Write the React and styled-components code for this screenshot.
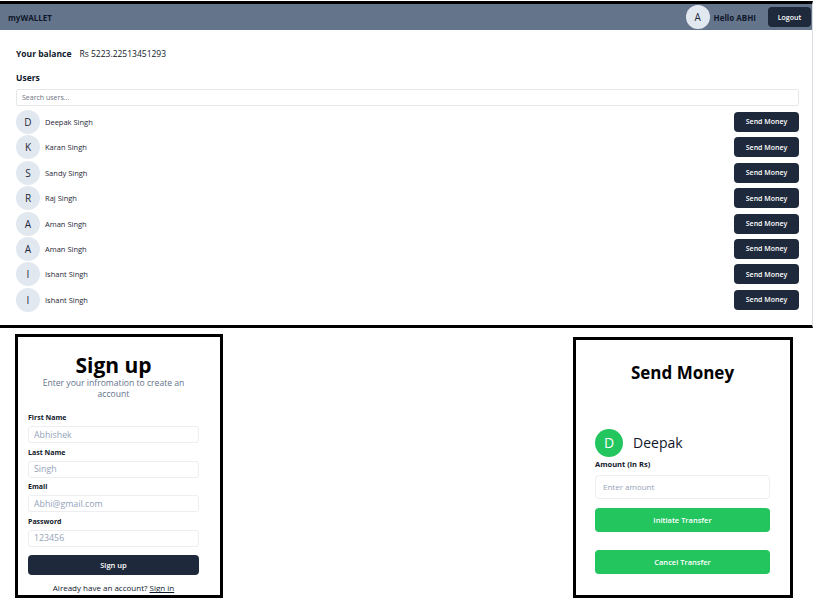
import React from "react";
import styled, { createGlobalStyle } from "styled-components";

const Global = createGlobalStyle`
  html, body { margin: 0; padding: 0; background: #fff; }
  body { font-family: "Open Sans", "Noto Sans", Arial, sans-serif; color: #0f172a; }
  * { box-sizing: border-box; }
`;

const Page = styled.div`
  width: 814px;
  height: 601px;
  overflow: hidden;
  padding-top: 1px;
  display: flex;
  flex-direction: column;
`;

const Dashboard = styled.section`
  width: 813px;
  border-top: 3px solid #000;
  border-bottom: 3px solid #000;
  border-right: 1px solid #d9dde3;
  display: flex;
  flex-direction: column;
`;

const Header = styled.header`
  height: 26px;
  background: #64748b;
  display: flex;
  align-items: center;
  justify-content: space-between;
  padding: 0 1px 0 8px;
`;

const Brand = styled.div`
  font-size: 8px;
  font-weight: 700;
  color: #0f172a;
`;

const HeaderRight = styled.div`
  display: flex;
  align-items: center;
`;

const Avatar = styled.div`
  width: ${(p) => p.$size || 24}px;
  height: ${(p) => p.$size || 24}px;
  border-radius: 50%;
  background: ${(p) => p.$bg || "#e2e8f0"};
  color: ${(p) => p.$fg || "#1e293b"};
  font-size: ${(p) => p.$font || 10}px;
  display: flex;
  align-items: center;
  justify-content: center;
  flex-shrink: 0;
`;

const Hello = styled.span`
  font-size: 8px;
  font-weight: 700;
  margin-left: 4px;
  margin-right: 12px;
  color: #0f172a;
`;

const DarkButton = styled.button`
  background: #1e293b;
  color: #fff;
  border: none;
  border-radius: 4px;
  font-family: inherit;
  font-size: ${(p) => p.$font || 7}px;
  font-weight: 600;
  width: ${(p) => p.$w || "auto"};
  height: ${(p) => p.$h || 20}px;
  margin-top: ${(p) => p.$mt || 0}px;
  padding: 0;
  display: flex;
  align-items: center;
  justify-content: center;
  cursor: pointer;
`;

const Main = styled.main`
  padding: 0 13px 12.5px 16px;
  display: flex;
  flex-direction: column;
`;

const BalanceRow = styled.div`
  margin-top: 14px;
  height: 18px;
  display: flex;
  align-items: center;
  gap: 8px;
  font-size: 8.5px;
`;

const Bold = styled.span`
  font-weight: 700;
`;

const SectionTitle = styled.div`
  margin-top: 7px;
  height: 18px;
  line-height: 18px;
  font-size: 8.5px;
  font-weight: 700;
`;

const Search = styled.input`
  margin-top: 2px;
  height: 17px;
  width: 100%;
  border: 1px solid #e5e7eb;
  border-radius: 2px;
  padding: 0 5px;
  font-family: inherit;
  font-size: 7px;
  outline: none;
  &::placeholder { color: #6b7280; }
`;

const List = styled.div`
  margin-top: 3.3px;
  display: flex;
  flex-direction: column;
`;

const Row = styled.div`
  height: 25.4px;
  display: flex;
  align-items: center;
  justify-content: space-between;
`;

const UserInfo = styled.div`
  display: flex;
  align-items: center;
  gap: 5px;
`;

const Name = styled.span`
  font-size: 7.5px;
  color: #1f2937;
`;

const Bottom = styled.div`
  display: flex;
  justify-content: space-between;
  align-items: flex-start;
  padding: 0 21px 0 15px;
`;

const Card = styled.div`
  border: 3px solid #000;
  background: #fff;
  display: flex;
  flex-direction: column;
  width: ${(p) => p.$w}px;
  height: ${(p) => p.$h}px;
  margin-top: ${(p) => p.$top}px;
  padding: ${(p) => p.$pad};
`;

const SignTitle = styled.h1`
  margin: 0;
  text-align: center;
  font-size: 21px;
  line-height: 21px;
  font-weight: 700;
  color: #000;
`;

const Subtitle = styled.p`
  margin: 2px 0 0;
  padding: 0 6px;
  text-align: center;
  font-size: 8.6px;
  line-height: 11px;
  color: #64748b;
`;

const Form = styled.div`
  margin-top: 9px;
  display: flex;
  flex-direction: column;
`;

const Label = styled.label`
  display: block;
  padding-top: ${(p) => p.$pt ?? 3}px;
  font-size: ${(p) => p.$font || 7}px;
  line-height: ${(p) => p.$lh || 11}px;
  font-weight: 700;
  color: #0f172a;
`;

const Field = styled.input`
  margin-top: ${(p) => p.$mt ?? 3}px;
  width: 100%;
  height: ${(p) => p.$h || 17}px;
  border: 1px solid #eceef1;
  border-radius: ${(p) => p.$r || 3}px;
  padding: 0 ${(p) => p.$px || 5}px;
  font-family: inherit;
  font-size: ${(p) => p.$font || 8.8}px;
  outline: none;
  &::placeholder { color: #94a3b8; }
`;

const Footer = styled.p`
  margin: 7.5px 0 0;
  text-align: center;
  font-size: 8px;
  line-height: 11px;
  color: #0f172a;
`;

const Link = styled.a`
  color: #0f172a;
  text-decoration: underline;
`;

const SendTitle = styled.h2`
  margin: 0;
  text-align: center;
  font-size: 17px;
  line-height: 22px;
  font-weight: 700;
  color: #000;
`;

const Recipient = styled.div`
  margin-top: 44.5px;
  height: 29px;
  display: flex;
  align-items: center;
  gap: 10px;
`;

const RecipientName = styled.span`
  font-size: 14px;
  color: #0f172a;
`;

const GreenButton = styled.button`
  margin-top: ${(p) => p.$mt}px;
  width: 100%;
  height: 24px;
  border: none;
  border-radius: 4px;
  background: #22c55e;
  color: #fff;
  font-family: inherit;
  font-size: 7.5px;
  font-weight: 600;
  cursor: pointer;
`;

const users = [
  "Deepak Singh",
  "Karan Singh",
  "Sandy Singh",
  "Raj Singh",
  "Aman Singh",
  "Aman Singh",
  "Ishant Singh",
  "Ishant Singh",
];

export default function App() {
  return (
    <Page>
      <Global />
      <Dashboard>
        <Header>
          <Brand>myWALLET</Brand>
          <HeaderRight>
            <Avatar>A</Avatar>
            <Hello>Hello ABHI</Hello>
            <DarkButton $w="43px" $h={20}>Logout</DarkButton>
          </HeaderRight>
        </Header>
        <Main>
          <BalanceRow>
            <Bold>Your balance</Bold>
            <span>Rs 5223.22513451293</span>
          </BalanceRow>
          <SectionTitle>Users</SectionTitle>
          <Search placeholder="Search users..." />
          <List>
            {users.map((u, i) => (
              <Row key={i}>
                <UserInfo>
                  <Avatar>{u[0]}</Avatar>
                  <Name>{u}</Name>
                </UserInfo>
                <DarkButton $w="65px" $h={20}>Send Money</DarkButton>
              </Row>
            ))}
          </List>
        </Main>
      </Dashboard>
      <Bottom>
        <Card $w={208} $h={264} $top={6} $pad="18.5px 21px 0 10px">
          <SignTitle>Sign up</SignTitle>
          <Subtitle>Enter your infromation to create an account</Subtitle>
          <Form>
            <Label>First Name</Label>
            <Field placeholder="Abhishek" />
            <Label $pt={3.5}>Last Name</Label>
            <Field placeholder="Singh" />
            <Label $pt={3.5}>Email</Label>
            <Field placeholder="Abhi@gmail.com" />
            <Label $pt={3.5}>Password</Label>
            <Field placeholder="123456" />
            <DarkButton $h={20} $font={7.5} $mt={8}>Sign up</DarkButton>
          </Form>
          <Footer>
            Already have an account? <Link href="#">Sign in</Link>
          </Footer>
        </Card>
        <Card $w={220} $h={261} $top={9} $pad="22px 20px 0 19px">
          <SendTitle>Send Money</SendTitle>
          <Recipient>
            <Avatar $size={28} $bg="#22c55e" $fg="#fff" $font={14}>D</Avatar>
            <RecipientName>Deepak</RecipientName>
          </Recipient>
          <Label $pt={1.5} $lh={10} $font={7.5}>Amount (in Rs)</Label>
          <Field $mt={6} $h={24} $r={4} $px={7} $font={8} placeholder="Enter amount" />
          <GreenButton $mt={9}>Initiate Transfer</GreenButton>
          <GreenButton $mt={18}>Cancel Transfer</GreenButton>
        </Card>
      </Bottom>
    </Page>
  );
}
